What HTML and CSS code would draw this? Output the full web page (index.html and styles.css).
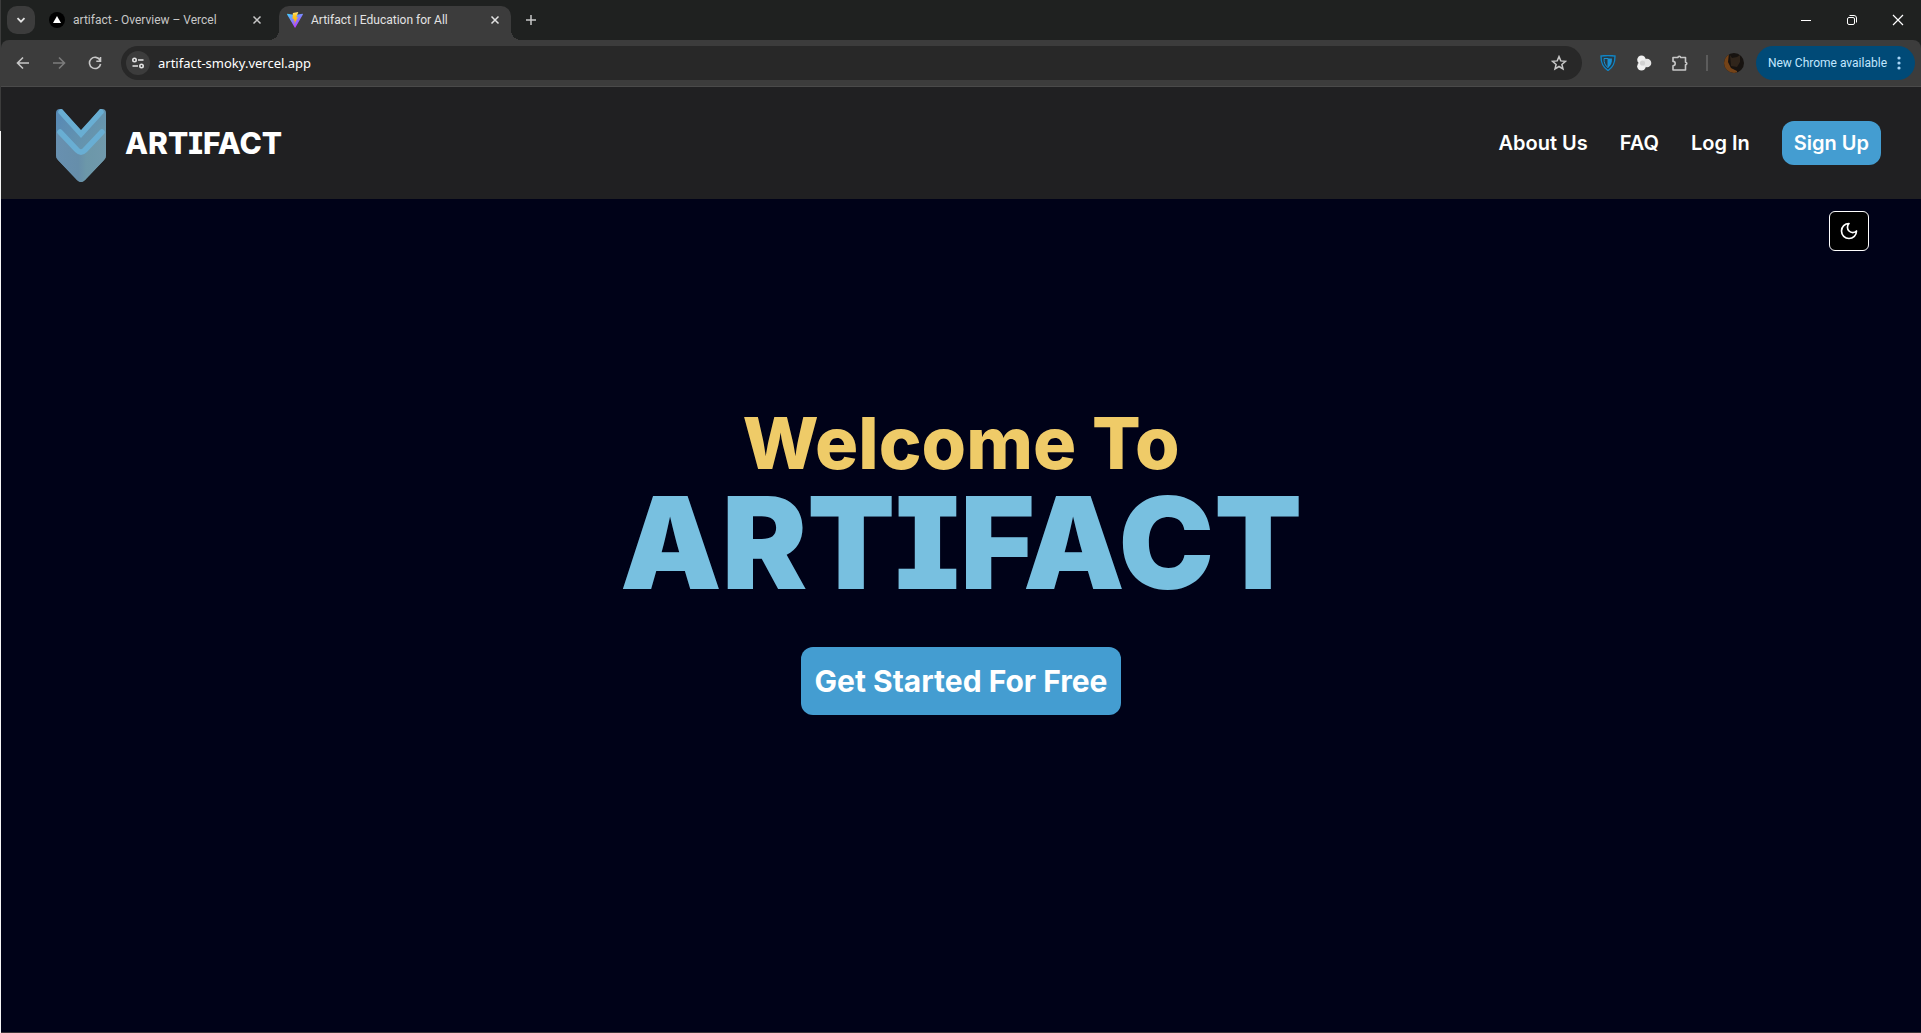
FILE: index.html
```
<!DOCTYPE html>
<html lang="en">
<head>
    <meta charset="UTF-8">
    <meta name="viewport" content="width=device-width, initial-scale=1.0">
    <title>Artifact | Education for All</title>
    <link rel="stylesheet" href="styles.css">
</head>

<body>
    <!-- Browser window -->
    <div class="browser">
        <div class="tab-strip">
            <button class="tab-search" aria-label="Search tabs">
                <svg width="10" height="10" viewBox="0 0 10 10"><path d="M1.5 3.2 5 6.7l3.5-3.5" fill="none" stroke="#e3e3e3" stroke-width="1.8"/></svg>
            </button>
            <div class="tab">
                <svg width="16" height="16" viewBox="0 0 16 16"><circle cx="8" cy="8" r="8" fill="#000"/><path d="M8 4l4 7H4z" fill="#fff"/></svg>
                <span class="tab-title">artifact - Overview – Vercel</span>
                <button class="tab-close" aria-label="Close tab">
                    <svg width="10" height="10" viewBox="0 0 10 10"><path d="M1.500 1.500l7 7m0-7l-7 7" stroke="#c7c7c7" stroke-width="1.500"/></svg>
                </button>
            </div>
            <div class="tab active">
                <svg width="16" height="16" viewBox="0 0 16 16">
                    <defs>
                        <linearGradient id="vite-body" x1="0" y1="0" x2=".6" y2="1"><stop offset="0" stop-color="#41d1ff"/><stop offset="1" stop-color="#bd34fe"/></linearGradient>
                        <linearGradient id="vite-bolt" x1="0" y1="0" x2="0" y2="1"><stop offset="0" stop-color="#ffea83"/><stop offset=".3" stop-color="#ffc61f"/><stop offset="1" stop-color="#ffa800"/></linearGradient>
                    </defs>
                    <path d="M15.900 2.400 8.400 15.600a.4.4 0 0 1-.7 0L.1 2.400a.4.4 0 0 1 .4-.6L8 3.100l7.500-1.300a.4.4 0 0 1 .4.6z" fill="url(#vite-body)"/>
                    <path d="M11.300 0 5.900 1.100 5.500 7l1.600-.3-.5 2.200 1.300-.3-.8 4 3.900-7.500-1.900.3z" fill="url(#vite-bolt)"/>
                </svg>
                <span class="tab-title">Artifact | Education for All</span>
                <button class="tab-close" aria-label="Close tab">
                    <svg width="10" height="10" viewBox="0 0 10 10"><path d="M1.500 1.500l7 7m0-7l-7 7" stroke="#e3e3e3" stroke-width="1.500"/></svg>
                </button>
            </div>
            <button class="new-tab" aria-label="New tab">
                <svg width="12" height="12" viewBox="0 0 12 12"><path d="M6 1v10M1 6h10" stroke="#c7c7c7" stroke-width="1.500"/></svg>
            </button>
            <div class="window-controls">
                <button aria-label="Minimize"><svg width="12" height="12" viewBox="0 0 12 12"><path d="M1 6.500h10" stroke="#fff"/></svg></button>
                <button aria-label="Restore"><svg width="12" height="12" viewBox="0 0 12 12" fill="none" stroke="#fff"><rect x="1.500" y="3.500" width="7" height="7" rx="1.500"/><path d="M3.500 1.500H8a2.500 2.500 0 0 1 2.500 2.500v4.500"/></svg></button>
                <button aria-label="Close"><svg width="12" height="12" viewBox="0 0 12 12"><path d="M1 1l10 10M11 1L1 11" stroke="#fff" stroke-width="1.200"/></svg></button>
            </div>
        </div>

        <div class="toolbar">
            <button class="tool" aria-label="Back"><svg width="14" height="14" viewBox="0 0 14 14"><path d="M13 7H2M7 1.500L1.500 7 7 12.500" fill="none" stroke="#c7c7c7" stroke-width="1.600"/></svg></button>
            <button class="tool" aria-label="Forward" disabled><svg width="14" height="14" viewBox="0 0 14 14"><path d="M1 7h11M7 1.500L12.500 7 7 12.500" fill="none" stroke="#7c7c7c" stroke-width="1.600"/></svg></button>
            <button class="tool" aria-label="Reload"><svg width="14" height="14" viewBox="0 0 14 14"><path d="M12 4.200A5.600 5.600 0 1 0 12.600 8M12.500 1v4.200H8.300" fill="none" stroke="#c7c7c7" stroke-width="1.600"/></svg></button>
            <div class="omnibox">
                <button class="site-info" aria-label="View site information">
                    <svg width="14" height="14" viewBox="0 0 14 14" fill="none" stroke="#e3e3e3" stroke-width="1.600"><circle cx="3.500" cy="4" r="1.700"/><path d="M7 4h5.500M1.500 10H7"/><circle cx="10.500" cy="10" r="1.700"/></svg>
                </button>
                <input class="address" type="text" value="artifact-smoky.vercel.app" aria-label="Address and search bar">
                <button class="bookmark" aria-label="Bookmark this tab">
                    <svg width="16" height="16" viewBox="0 0 16 16"><path d="M8 1.600l1.800 4.300 4.700.4-3.600 3.100 1.100 4.600L8 11.500 4 14l1.100-4.600L1.500 6.300l4.700-.4z" fill="none" stroke="#c7c7c7" stroke-width="1.500"/></svg>
                </button>
            </div>
            <button class="extension" aria-label="Shield extension">
                <svg width="16" height="16" viewBox="0 0 16 16"><path d="M1 1Q8 0 15 1C15 8 13.500 12 8 15.500 2.500 12 1 8 1 1z" fill="#263a45" stroke="#1185c5" stroke-width="1.400"/><path d="M8 3.500h4C12 8 11 10.500 8 12.700z" fill="#1a8fd0"/><path d="M8 3.500H4C4 8 5 10.500 8 12.700z" fill="none" stroke="#1a8fd0"/></svg>
            </button>
            <button class="extension" aria-label="Circles extension">
                <svg width="16" height="16" viewBox="0 0 16 16" fill="#f1f1f1"><circle cx="5.500" cy="4.800" r="4.300"/><circle cx="5.500" cy="11.200" r="4.300"/><circle cx="11" cy="8" r="4.300" fill="#e6e6e6"/><circle cx="6.500" cy="8" r="2.600" fill="#d2d2d2"/></svg>
            </button>
            <button class="extension" aria-label="Extensions">
                <svg width="18" height="18" viewBox="0 0 18 18" fill="none" stroke="#c7c7c7" stroke-width="1.600" stroke-linejoin="round"><path d="M2 3.500h5a1.300 1.300 0 0 1 2.600 0H14.500V8.200a1.300 1.300 0 0 1 0 2.600V16H2v-4.200a2.200 2.200 0 0 0 0-4.400z"/></svg>
            </button>
            <span class="divider"></span>
            <button class="profile" aria-label="Profile">
                <svg width="20" height="20" viewBox="0 0 20 20"><clipPath id="avatar"><circle cx="10" cy="10" r="10"/></clipPath><g clip-path="url(#avatar)"><path d="M0 0h20v20H0z" fill="#171310"/><path d="M0 0h5l-1 9 3 6 6 3v2H0z" fill="#744318"/><path d="M6 2l2 3 5-1 3-2v7l-3 5-6-1z" fill="#30251b"/></g></svg>
            </button>
            <button class="update">
                New Chrome available
                <svg width="4" height="16" viewBox="0 0 4 16" fill="#a8d6f7"><circle cx="2" cy="3" r="1.600"/><circle cx="2" cy="8" r="1.600"/><circle cx="2" cy="13" r="1.600"/></svg>
            </button>
        </div>
    </div>

    <!-- Navigation -->
    <header class="navbar">
        <a class="brand" href="#">
            <svg class="logo" width="50" height="74" viewBox="0 0 50 74">
                <defs>
                    <linearGradient id="logo-body" x1="0" y1="0" x2="1" y2="1"><stop offset="0" stop-color="#5688b5"/><stop offset="1" stop-color="#739fa8"/></linearGradient>
                    <linearGradient id="logo-front" x1="0" y1="0" x2="1" y2="0"><stop offset="0" stop-color="#6890b0"/><stop offset=".45" stop-color="#668eaa"/><stop offset=".6" stop-color="#6c97a9"/><stop offset="1" stop-color="#7099ac"/></linearGradient>
                </defs>
                <path d="M0 4Q0 0 4 0h2l19 22L44 0h2q4 0 4 4v42q0 3-2 5L29 71q-4 4-8 0L2 51q-2-2-2-5z" fill="url(#logo-body)"/>
                <path d="M0 23h4l16 17q5 4 10 0l16-17h4v23q0 3-2 5L29 71q-4 4-8 0L2 51q-2-2-2-5z" fill="url(#logo-front)"/>
                <path d="M5 3l20 22L45 3M4 23l17 18q4 4 8 0l17-18" fill="none" stroke="#69aed3" stroke-width="5.500" stroke-linecap="round"/>
            </svg>
            <span class="brand-name">ARTIFACT</span>
        </a>
        <nav class="nav-links">
            <a href="#about">About Us</a>
            <a href="#faq">FAQ</a>
            <a href="#login">Log In</a>
            <a class="sign-up" href="#signup">Sign Up</a>
        </nav>
    </header>

    <!-- Landing -->
    <main class="landing">
        <button class="theme-toggle" aria-label="Toggle theme">
            <svg width="20" height="20" viewBox="0 0 24 24" fill="none" stroke="#fff" stroke-width="2" stroke-linecap="round" stroke-linejoin="round"><path d="M12 3a6 6 0 0 0 9 9 9 9 0 1 1-9-9z"/></svg>
        </button>
        <section class="hero">
            <h1>
                <span class="welcome">Welcome To</span>
                <span class="hero-name">ARTIFACT</span>
            </h1>
            <a class="get-started" href="#signup">Get Started For Free</a>
        </section>
    </main>
</body>
</html>
```
FILE: styles.css
```
* {
    box-sizing: border-box;
}

body {
    margin: 0;
    padding-left: 1px;
    min-height: 100vh;
    display: flex;
    flex-direction: column;
    font-family: Inter, sans-serif;
    background: linear-gradient(#3c3c3c 131px, #f5f5f5 131px);
}

button {
    display: flex;
    align-items: center;
    justify-content: center;
    padding: 0;
    border: 0;
    background: none;
    font-family: inherit;
}

svg {
    display: block;
    flex-shrink: 0;
}

a {
    color: inherit;
    text-decoration: none;
}

/* Browser window */
.browser {
    font-family: Roboto, sans-serif;
    font-size: 12px;
    color: #e3e3e3;
    background-color: #1f2120;
}

.tab-strip {
    display: flex;
    align-items: center;
    height: 40px;
    padding-left: 6px;
}

.tab-search {
    width: 28px;
    height: 28px;
    margin-right: 4px;
    border-radius: 10px;
    background-color: #3c3c3c;
}

.tab {
    display: flex;
    align-items: center;
    gap: 8px;
    width: 240px;
    height: 34px;
    padding: 0 14px 0 10px;
    color: #c7c7c7;
}

.tab.active {
    width: 232px;
    align-self: flex-end;
    padding: 0 8px 6px;
    border-radius: 10px 10px 0 0;
    background-color: #3c3c3c;
    color: #e3e3e3;
    position: relative;
}

/* Curved feet of the active tab */
.tab.active::before,
.tab.active::after {
    content: '';
    position: absolute;
    bottom: 0;
    width: 10px;
    height: 10px;
}
.tab.active::before {
    right: 100%;
    background: radial-gradient(circle at 0 0, transparent 10px, #3c3c3c 10px);
}
.tab.active::after {
    left: 100%;
    background: radial-gradient(circle at 100% 0, transparent 10px, #3c3c3c 10px);
}

.tab-title {
    flex: 1;
    white-space: nowrap;
}

.tab-close {
    width: 16px;
    height: 16px;
}

.new-tab {
    width: 28px;
    height: 28px;
    margin-left: 6px;
}

.window-controls {
    display: flex;
    margin-left: auto;
}

.window-controls button {
    width: 46px;
    height: 40px;
}

.toolbar {
    display: flex;
    align-items: center;
    height: 47px;
    padding: 0 6px 0 4px;
    border-bottom: 1px solid #4a4a4a;
    border-radius: 8px 8px 0 0;
    background-color: #3c3c3c;
}

.tool {
    width: 36px;
    height: 34px;
}

.omnibox {
    flex: 1;
    display: flex;
    align-items: center;
    height: 34px;
    margin: 0 8px;
    padding: 0 15px 0 5px;
    border-radius: 17px;
    background-color: #282828;
}

.site-info {
    width: 24px;
    height: 24px;
    border-radius: 50%;
    background-color: #3c3c3c;
}

.address {
    flex: 1;
    padding: 0 8px;
    border: 0;
    outline: 0;
    background: none;
    color: #fff;
    font-family: "Noto Sans", sans-serif;
    font-size: 13px;
}

.extension {
    width: 36px;
    height: 34px;
}

.divider {
    width: 2px;
    height: 16px;
    margin: 0 16px 0 8px;
    background-color: #5c5c5c;
}

.profile {
    margin-right: 12px;
}

.update {
    gap: 10px;
    height: 34px;
    padding: 0 14px 0 12px;
    border-radius: 17px;
    background-color: #004a77;
    color: #c2e7ff;
    font-size: 12px;
}

/* Navigation */
.navbar {
    display: flex;
    align-items: center;
    justify-content: space-between;
    height: 112px;
    padding: 0 40px 0 55px;
    background-color: #202022;
    color: #fff;
}

.brand {
    display: flex;
    align-items: center;
    gap: 19px;
}

.logo {
    margin-top: 6px;
}

.brand-name {
    font-size: 30px;
    font-weight: 800;
    font-feature-settings: "cv08";
}

.nav-links {
    display: flex;
    align-items: center;
    gap: 32px;
    font-size: 20px;
    font-weight: 600;
}

.sign-up {
    padding: 10px 12px;
    border-radius: 12px;
    background-color: #449dd1;
    line-height: 24px;
}

/* Landing */
.landing {
    flex: 1;
    display: flex;
    flex-direction: column;
    padding: 12px 52px;
    border-bottom: 1px solid #3a3438;
    background-color: #000218;
}

.theme-toggle {
    align-self: flex-end;
    width: 40px;
    height: 40px;
    border: 1px solid #fff;
    border-radius: 6px;
    background-color: #000;
}

.hero {
    display: flex;
    flex-direction: column;
    align-items: center;
    gap: 40px;
    margin-top: 156px;
}

.hero h1 {
    display: flex;
    flex-direction: column;
    align-items: center;
    margin: 0;
}

.welcome {
    color: #efcb68;
    font-size: 72px;
    font-weight: 800;
    line-height: 72px;
}

.hero-name {
    color: #78c0e0;
    font-size: 128px;
    font-weight: 900;
    line-height: 128px;
    font-feature-settings: "cv08";
}

.get-started {
    padding: 16px 14px;
    border-radius: 12px;
    background-color: #449dd1;
    color: #fff;
    font-size: 30px;
    font-weight: 700;
    line-height: 36px;
}
```
